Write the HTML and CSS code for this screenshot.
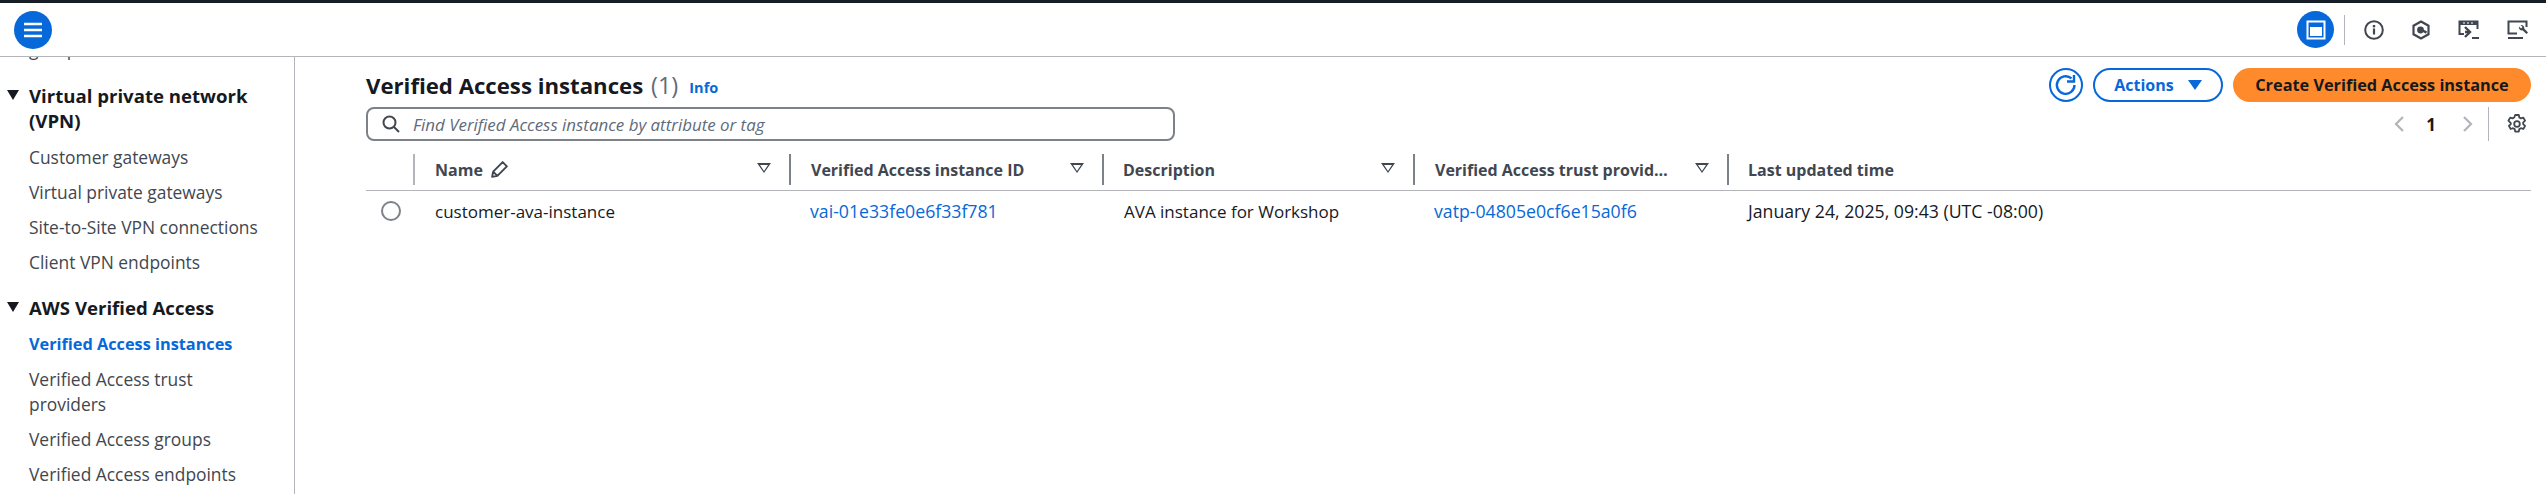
FILE: index.html
```html
<!DOCTYPE html>
<html lang="en">
<head>
<meta charset="utf-8">
<title>Verified Access instances</title>
<link rel="stylesheet" href="styles.css">
</head>
<body>
<div class="topbar"></div>
<header class="header">
  <button class="menu-btn" aria-label="Menu">
    <svg viewBox="0 0 20 16" width="20" height="16"><path d="M1 2h18M1 8h18M1 14h18" stroke="#fff" stroke-width="2.4" fill="none"/></svg>
  </button>
  <div class="tools">
    <span class="panel-btn"><svg viewBox="0 0 20 20" width="20" height="20"><path d="M1.500 1.500h17v17h-17z" fill="none" stroke="#fff" stroke-width="2"/><path d="M4 7h12v9H4z" fill="#fff"/></svg></span>
    <span class="tool-divider"></span>
    <svg class="tool" viewBox="0 0 20 20" width="20" height="20"><circle cx="10" cy="10" r="8.800" fill="none" stroke="#414750" stroke-width="2"/><path d="M10 8.500v6" stroke="#414750" stroke-width="2.200"/><path d="M10 5v2.400" stroke="#414750" stroke-width="2.400"/></svg>
    <svg class="tool" viewBox="0 0 20 20" width="20" height="20"><path d="M10 1.500l7.500 4.200v8.600L10 18.500l-7.500-4.200V5.700z" fill="none" stroke="#414750" stroke-width="2.200"/><circle cx="9.500" cy="10" r="3.400" fill="#414750"/><path d="M11 10l4.500 2.600" stroke="#414750" stroke-width="2.400"/></svg>
    <svg class="tool" viewBox="0 0 22 20" width="22" height="20"><path d="M6 14H1.500V1.500h18V9" fill="none" stroke="#414750" stroke-width="2"/><path d="M2 2h17v3H2z" fill="#414750"/><path d="M5 3h2M9 3h2M13 3h2" stroke="#fff" stroke-width="1"/><path d="M7 7l5 5-5 5M7 12h4" fill="none" stroke="#414750" stroke-width="2.400"/><path d="M14 18h7" stroke="#414750" stroke-width="2"/></svg>
    <svg class="tool" viewBox="0 0 22 20" width="22" height="20"><path d="M10 13.500H1.500v-12h18V7" fill="none" stroke="#414750" stroke-width="2"/><path d="M1 18h15" stroke="#414750" stroke-width="2"/><path d="M12 6.500a3 3 0 0 0 3.500 3.800l4 3.700 1.500-1.500-3.800-4A3 3 0 0 0 13.500 5l2 2-1.500 1.500z" fill="#414750"/></svg>
  </div>
</header>
<div class="layout">
  <nav class="sidebar">
    <div class="clipped">groups</div>
    <div class="nav-group">
      <div class="nav-title"><span class="caret"></span>Virtual private network (VPN)</div>
      <a class="nav-item">Customer gateways</a>
      <a class="nav-item">Virtual private gateways</a>
      <a class="nav-item">Site-to-Site VPN connections</a>
      <a class="nav-item">Client VPN endpoints</a>
    </div>
    <div class="nav-group">
      <div class="nav-title"><span class="caret"></span>AWS Verified Access</div>
      <a class="nav-item active">Verified Access instances</a>
      <a class="nav-item narrow">Verified Access trust providers</a>
      <a class="nav-item">Verified Access groups</a>
      <a class="nav-item">Verified Access endpoints</a>
    </div>
  </nav>
  <main class="main">
    <div class="title-row">
      <h1 class="title">Verified Access instances <span class="count">(1)</span></h1>
      <a class="info">Info</a>
      <div class="actions">
        <button class="refresh" aria-label="Refresh">
          <svg viewBox="0 0 24 24" width="24" height="24"><path d="M20.500 12a8.800 8.800 0 1 1-3-6.600" fill="none" stroke="#0668d9" stroke-width="2.400"/><path d="M13 8.500h7V2" fill="none" stroke="#0668d9" stroke-width="2.400"/></svg>
        </button>
        <button class="btn-actions">Actions<span class="btn-caret"></span></button>
        <button class="btn-create">Create Verified Access instance</button>
      </div>
    </div>
    <div class="filter-row">
      <div class="search">
        <svg viewBox="0 0 18 18" width="18" height="18"><circle cx="7.500" cy="7.500" r="6" fill="none" stroke="#414750" stroke-width="2"/><path d="M12 12l5 5" stroke="#414750" stroke-width="2"/></svg>
        <span class="placeholder">Find Verified Access instance by attribute or tag</span>
      </div>
      <div class="pager">
        <svg viewBox="0 0 12 18" width="12" height="18"><path d="M10 2L3 9l7 7" fill="none" stroke="#b1b4ba" stroke-width="2.200"/></svg>
        <span class="page-num">1</span>
        <svg viewBox="0 0 12 18" width="12" height="18"><path d="M2 2l7 7-7 7" fill="none" stroke="#b1b4ba" stroke-width="2.200"/></svg>
        <span class="pager-divider"></span>
        <svg class="gear" viewBox="0 0 20 20" width="20" height="20"><path d="M8.200 1h3.600l.5 2.500 1.600.9 2.400-.8 1.800 3.100-1.900 1.700v1.800l1.900 1.700-1.800 3.100-2.400-.8-1.600.9-.5 2.500H8.200l-.5-2.500-1.600-.9-2.400.8-1.800-3.100 1.900-1.700V9.100L1.400 6.700l1.800-3.100 2.400.8 1.600-.9z" fill="none" stroke="#414750" stroke-width="1.800" stroke-linejoin="round"/><circle cx="10" cy="10" r="2.800" fill="none" stroke="#414750" stroke-width="1.800"/></svg>
      </div>
    </div>
    <div class="table">
      <div class="thead">
        <div class="cell-select"></div>
        <div class="th th-name">Name <svg class="pencil" viewBox="0 0 18 18" width="19" height="19"><path d="M2 16l1-5L12 2l4 4-9 9zM3 11l4 4" fill="none" stroke="#414750" stroke-width="1.800" stroke-linejoin="round"/></svg><span class="sort"></span></div>
        <div class="th th-id">Verified Access instance ID<span class="sort"></span></div>
        <div class="th th-desc">Description<span class="sort"></span></div>
        <div class="th th-trust">Verified Access trust provid…<span class="sort"></span></div>
        <div class="th th-time">Last updated time</div>
      </div>
      <div class="tr">
        <div class="cell-select"><span class="radio"></span></div>
        <div class="td">customer-ava-instance</div>
        <div class="td td-wide"><a class="link">vai-01e33fe0e6f33f781</a></div>
        <div class="td">AVA instance for Workshop</div>
        <div class="td td-wide"><a class="link">vatp-04805e0cf6e15a0f6</a></div>
        <div class="td td-wide">January 24, 2025, 09:43 (UTC -08:00)</div>
      </div>
    </div>
  </main>
</div>
</body>
</html>
```
FILE: styles.css
```css
* { box-sizing: border-box; }
html, body { margin: 0; height: 100%; }
body {
  height: 494px;
  overflow: hidden;
  background: #fff;
  color: #16191f;
  font-family: "Open Sans", "Noto Sans", sans-serif;
  font-size: 16px;
}
.topbar { height: 3px; background: #161d26; }
.header {
  height: 54px;
  border-bottom: 1px solid #b4b4bb;
  display: flex;
  align-items: center;
  justify-content: space-between;
  padding: 0 17px 0 14px;
}
.menu-btn {
  width: 38px;
  height: 38px;
  border: 0;
  padding: 0;
  border-radius: 50%;
  background: #0668d9;
  display: flex;
  align-items: center;
  justify-content: center;
}
.tools { display: flex; align-items: center; }
.panel-btn {
  width: 37px;
  height: 37px;
  border-radius: 50%;
  background: #0668d9;
  display: flex;
  align-items: center;
  justify-content: center;
}
.tool-divider { width: 1px; height: 30px; background: #b4b4bb; margin: 0 19px 0 10px; }
.tool { margin-right: 27px; }
.tool:last-child { margin-right: 0; }
.layout { display: flex; height: 437px; }
.sidebar {
  width: 295px;
  flex: none;
  border-right: 1px solid #b4b4bb;
  overflow: hidden;
  font-size: 17.400px;
  color: #414750;
}
.clipped { line-height: 24px; margin: -20px 0 22px 29px; }
.nav-group { margin-bottom: 20px; }
.nav-title {
  position: relative;
  padding: 0 20px 0 29px;
  font-size: 18.600px;
  font-weight: 700;
  line-height: 25px;
  color: #16191f;
  margin-bottom: 12px;
}
.caret {
  position: absolute;
  left: 7px;
  top: 7px;
  border-left: 6px solid transparent;
  border-right: 6px solid transparent;
  border-top: 10px solid #16191f;
}
.nav-item {
  display: block;
  padding: 0 20px 0 29px;
  line-height: 25px;
  margin-bottom: 10px;
}
.nav-item.narrow { padding-right: 70px; }
.nav-item.active { color: #0668d9; font-weight: 700; font-size: 16.300px; }
.main { flex: 1; padding: 11px 15px 0 71px; min-width: 0; }
.title-row { display: flex; align-items: center; height: 34px; }
.title { margin: 0; font-size: 22.200px; font-weight: 700; line-height: 34px; }
.count { font-weight: 400; color: #5f6b7a; font-size: 23.500px; margin-left: 2px; }
.info { margin-left: 11px; padding-top: 4px; font-size: 14.500px; font-weight: 700; color: #0668d9; }
.actions { margin-left: auto; display: flex; align-items: center; }
.refresh {
  width: 34px;
  height: 34px;
  border-radius: 50%;
  border: 2px solid #0668d9;
  background: #fff;
  padding: 0;
  margin-right: 10px;
  display: flex;
  align-items: center;
  justify-content: center;
}
.btn-actions {
  width: 130px;
  height: 34px;
  border: 2px solid #0668d9;
  border-radius: 17px;
  background: #fff;
  color: #0668d9;
  font: 700 16px "Open Sans", sans-serif;
  display: flex;
  align-items: center;
  justify-content: center;
  gap: 14px;
  padding: 0;
  margin-right: 10px;
}
.btn-caret {
  border-left: 7px solid transparent;
  border-right: 7px solid transparent;
  border-top: 10px solid #0668d9;
}
.btn-create {
  width: 298px;
  height: 34px;
  border: 0;
  border-radius: 17px;
  background: #ff8a2b;
  color: #16191f;
  font: 700 16.300px "Open Sans", sans-serif;
  padding: 0;
}
.filter-row { display: flex; justify-content: space-between; margin-top: 5px; height: 40px; }
.search {
  width: 809px;
  height: 34px;
  border: 2px solid #7d8189;
  border-radius: 8px;
  display: flex;
  align-items: center;
  gap: 13px;
  padding: 0 0 0 14px;
}
.placeholder { font-style: italic; font-size: 16.900px; color: #5f6b7a; }
.pager { display: flex; align-items: center; height: 34px; color: #16191f; }
.page-num { font-weight: 700; font-size: 17px; margin: 0 26px 0 21px; }
.pager-divider { width: 1px; height: 34px; background: #b4b4bb; margin: 0 18px 0 14px; }
.gear { margin-right: 4px; }
.table { margin-top: 7px; }
.thead {
  display: grid;
  grid-template-columns: 47px 376px 313px 311px 314px 1fr;
  height: 37px;
  border-bottom: 1px solid #b4b4bb;
  padding-bottom: 5px;
  align-items: stretch;
}
.tr {
  display: grid;
  grid-template-columns: 47px 376px 313px 311px 314px 1fr;
  align-items: center;
  height: 40px;
}
.th {
  display: flex;
  align-items: center;
  padding-left: 20px;
  border-left: 2px solid #7d8189;
  font-weight: 700;
  font-size: 16px;
  color: #414750;
  white-space: nowrap;
  position: relative;
}
.th-name { border-left-color: #b4b4bb; }
.th-desc, .th-time { padding-left: 19px; }
.pencil { margin-left: 7px; }
.sort {
  position: absolute;
  right: 18px;
  top: 9px;
  width: 14px;
  height: 10px;
  background: #414750;
  clip-path: polygon(0 0, 100% 0, 50% 100%, 0 0, 3px 2px, 7px 8px, 11px 2px, 3px 2px);
}
.td { padding-left: 22px; font-size: 17px; white-space: nowrap; }
.td-wide { font-size: 17.700px; padding-left: 21px; }
.cell-select { display: flex; justify-content: center; padding-left: 3px; }
.radio {
  width: 20px;
  height: 20px;
  border: 2px solid #7d8189;
  border-radius: 50%;
}
.link { color: #0668d9; }
```
